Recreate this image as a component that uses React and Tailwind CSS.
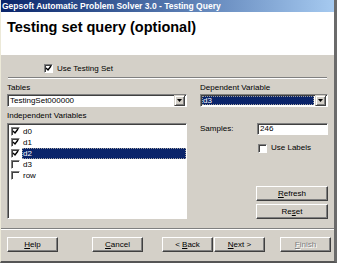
import React from "react";

const font = { fontFamily: '"Liberation Sans", Arial, sans-serif' };

function Check({ checked }) {
  return (
    <span className="inline-block w-[9px] h-[9px] bg-white border-t border-l border-t-[#808080] border-l-[#808080] border-b border-r border-b-white border-r-white shadow-[inset_1px_1px_0_#404040] shrink-0 relative">
      {checked && (
        <svg width="7" height="7" viewBox="0 0 7 7" className="absolute left-[0px] top-[0px]">
          <path d="M1 3 L3 5 L6 1" stroke="#000" strokeWidth="1.4" fill="none" />
        </svg>
      )}
    </span>
  );
}

function Btn({ children, className = "", disabled }) {
  return (
    <div
      className={`h-[15px] flex items-center justify-center bg-[#d4d0c8] border border-t-white border-l-white border-r-[#404040] border-b-[#404040] shadow-[inset_-1px_-1px_0_#808080] text-[8px] ${
        disabled ? "text-[#808080] [text-shadow:1px_1px_0_#fff]" : "text-black"
      } ${className}`}
    >
      {children}
    </div>
  );
}

function Arrow() {
  return (
    <div className="w-[11px] h-[11px] flex items-center justify-center bg-[#d4d0c8] border border-t-[#d4d0c8] border-l-[#d4d0c8] border-r-[#404040] border-b-[#404040] shadow-[inset_1px_1px_0_#fff,inset_-1px_-1px_0_#808080]">
      <svg width="5" height="3" viewBox="0 0 5 3">
        <path d="M0 0 H5 L2.5 3 Z" fill="#000" />
      </svg>
    </div>
  );
}

export default function App() {
  const vars = [
    { name: "d0", checked: true },
    { name: "d1", checked: true },
    { name: "d2", checked: true, selected: true },
    { name: "d3", checked: false },
    { name: "row", checked: false },
  ];

  return (
    <div style={font} className="w-[337px] h-[263px] bg-[#d4d0c8] flex flex-col border-l border-l-[#ece9d8] border-r-[3px] border-r-[#6b6b6b] border-b-2 border-b-[#555] overflow-hidden">
      {/* Title Bar */}
      <div className="h-[12px] bg-gradient-to-r from-[#0a246a] to-[#a6caf0] flex items-center pl-[1px]">
        <span className="text-white font-bold text-[8.5px] leading-none whitespace-nowrap">
          Gepsoft Automatic Problem Solver 3.0 - Testing Query
        </span>
      </div>

      {/* Header */}
      <div className="h-[43px] bg-white pl-[6px] pt-[7px]">
        <h1 className="text-[14.5px] font-bold leading-[16px] text-black">Testing set query (optional)</h1>
      </div>

      {/* Body */}
      <div className="flex-1 flex flex-col">
        <div className="flex items-center gap-[4px] pl-[43px] pt-[9px] h-[18px] text-[8px]">
          <Check checked />
          <span>Use Testing Set</span>
        </div>
        <div className="mx-[7px] mt-[4px] border-t border-t-[#808080] border-b border-b-white" />

        <div className="flex pl-[6px] pt-[4px] text-[8px] leading-[10px]">
          {/* Left column */}
          <div className="w-[180px] flex flex-col">
            <div className="h-[11px]">Tables</div>
            <div className="h-[13px] bg-white flex items-center border border-t-[#808080] border-l-[#808080] border-r-white border-b-white shadow-[inset_1px_1px_0_#404040] pl-[2px] pr-[1px]">
              <span className="flex-1">TestingSet000000</span>
              <Arrow />
            </div>
            <div className="h-[16px] pt-[4px]">Independent Variables</div>
            <div className="h-[96px] bg-white border border-t-[#808080] border-l-[#808080] border-r-white border-b-white shadow-[inset_1px_1px_0_#404040] pt-[2px] pl-[3px] flex flex-col">
              {vars.map((v) => (
                <div key={v.name} className="h-[11px] flex items-center gap-[2px]">
                  <Check checked={v.checked} />
                  <span
                    className={`flex-1 h-[11px] flex items-center pl-[1px] ${
                      v.selected ? "bg-[#0a246a] text-white outline outline-dotted outline-[#a0a0a0] -outline-offset-1" : ""
                    }`}
                  >
                    {v.name}
                  </span>
                </div>
              ))}
            </div>
          </div>

          {/* Right column */}
          <div className="ml-[13px] w-[128px] flex flex-col">
            <div className="h-[11px]">Dependent Variable</div>
            <div className="h-[13px] bg-white flex items-center border border-t-[#808080] border-l-[#808080] border-r-white border-b-white shadow-[inset_1px_1px_0_#404040] pl-[1px] pr-[1px]">
              <span className="flex-1 h-[9px] bg-[#0a246a] text-white flex items-center pl-[1px] mr-[1px] outline outline-dotted outline-[#a0a0a0] -outline-offset-1">d3</span>
              <Arrow />
            </div>
            <div className="flex items-center mt-[16px] h-[12px]">
              <span className="w-[57px]">Samples:</span>
              <div className="w-[71px] h-[12px] bg-white border border-t-[#808080] border-l-[#808080] border-r-white border-b-white shadow-[inset_1px_1px_0_#404040] flex items-center pl-[2px]">
                246
              </div>
            </div>
            <div className="flex items-center gap-[4px] ml-[58px] mt-[8px] h-[10px]">
              <Check />
              <span>Use Labels</span>
            </div>
            <div className="ml-[56px] mt-[33px] flex flex-col gap-[3px] w-[72px]">
              <Btn>
                <span><u>R</u>efresh</span>
              </Btn>
              <Btn>
                <span>Re<u>s</u>et</span>
              </Btn>
            </div>
          </div>
        </div>

        <div className="mt-auto mx-0 border-t border-t-[#808080] border-b border-b-white" />
        <div className="h-[31px] flex items-start pt-[7px] pl-[6px]">
          <Btn className="w-[51px]">
            <span><u>H</u>elp</span>
          </Btn>
          <Btn className="w-[51px] ml-[34px]">
            <span><u>C</u>ancel</span>
          </Btn>
          <Btn className="w-[51px] ml-[19px]">
            <span>&lt; <u>B</u>ack</span>
          </Btn>
          <Btn className="w-[51px] ml-[1px]">
            <span><u>N</u>ext &gt;</span>
          </Btn>
          <Btn className="w-[51px] ml-[15px]" disabled>
            <span><u>F</u>inish</span>
          </Btn>
        </div>
      </div>
    </div>
  );
}
